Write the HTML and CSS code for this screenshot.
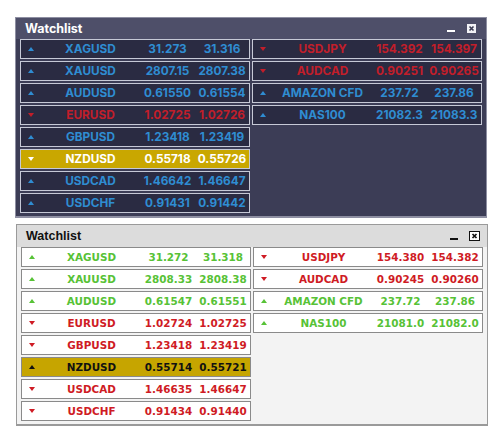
FILE: index.html
```html
<!DOCTYPE html>
<html>
<head>
<meta charset="utf-8">
<link rel="stylesheet" href="styles.css">
</head>
<body>
<div class="panel dark">
  <div class="title">
    <span class="name">Watchlist</span>
    <span class="min"></span>
    <span class="close"><svg width="9" height="9" viewBox="0 0 9 9"><rect x="0" y="0" width="9" height="9" fill="#f2f2f6"/><path d="M2.5 2.5 L6.5 6.5 M6.5 2.5 L2.5 6.5" stroke="#3a3b52" stroke-width="1.6"/></svg></span>
  </div>
  <div class="body">
    <div class="col">
      <div class="row up"><i class="arr"></i><span class="sym">XAGUSD</span><span class="bid">31.273</span><span class="ask">31.316</span></div>
      <div class="row up"><i class="arr"></i><span class="sym">XAUUSD</span><span class="bid">2807.15</span><span class="ask">2807.38</span></div>
      <div class="row up"><i class="arr"></i><span class="sym">AUDUSD</span><span class="bid">0.61550</span><span class="ask">0.61554</span></div>
      <div class="row down"><i class="arr"></i><span class="sym">EURUSD</span><span class="bid">1.02725</span><span class="ask">1.02726</span></div>
      <div class="row up"><i class="arr"></i><span class="sym">GBPUSD</span><span class="bid">1.23418</span><span class="ask">1.23419</span></div>
      <div class="row sel down"><i class="arr"></i><span class="sym">NZDUSD</span><span class="bid">0.55718</span><span class="ask">0.55726</span></div>
      <div class="row up"><i class="arr"></i><span class="sym">USDCAD</span><span class="bid">1.46642</span><span class="ask">1.46647</span></div>
      <div class="row up"><i class="arr"></i><span class="sym">USDCHF</span><span class="bid">0.91431</span><span class="ask">0.91442</span></div>
    </div>
    <div class="col">
      <div class="row down"><i class="arr"></i><span class="sym">USDJPY</span><span class="bid">154.392</span><span class="ask">154.397</span></div>
      <div class="row down"><i class="arr"></i><span class="sym">AUDCAD</span><span class="bid">0.90251</span><span class="ask">0.90265</span></div>
      <div class="row up"><i class="arr"></i><span class="sym">AMAZON CFD</span><span class="bid">237.72</span><span class="ask">237.86</span></div>
      <div class="row up"><i class="arr"></i><span class="sym">NAS100</span><span class="bid">21082.3</span><span class="ask">21083.3</span></div>
    </div>
  </div>
</div>

<div class="panel light">
  <div class="title">
    <span class="name">Watchlist</span>
    <span class="min"></span>
    <span class="close"><svg width="11" height="10" viewBox="0 0 11 10"><rect x="0.5" y="0.5" width="10" height="9" fill="#ffffff" stroke="#111" stroke-width="1"/><path d="M3.5 3 L7.5 7 M7.5 3 L3.5 7" stroke="#111" stroke-width="1.7"/></svg></span>
  </div>
  <div class="body">
    <div class="col">
      <div class="row up"><i class="arr"></i><span class="sym">XAGUSD</span><span class="bid">31.272</span><span class="ask">31.318</span></div>
      <div class="row up"><i class="arr"></i><span class="sym">XAUUSD</span><span class="bid">2808.33</span><span class="ask">2808.38</span></div>
      <div class="row up"><i class="arr"></i><span class="sym">AUDUSD</span><span class="bid">0.61547</span><span class="ask">0.61551</span></div>
      <div class="row down"><i class="arr"></i><span class="sym">EURUSD</span><span class="bid">1.02724</span><span class="ask">1.02725</span></div>
      <div class="row down"><i class="arr"></i><span class="sym">GBPUSD</span><span class="bid">1.23418</span><span class="ask">1.23419</span></div>
      <div class="row sel up"><i class="arr"></i><span class="sym">NZDUSD</span><span class="bid">0.55714</span><span class="ask">0.55721</span></div>
      <div class="row down"><i class="arr"></i><span class="sym">USDCAD</span><span class="bid">1.46635</span><span class="ask">1.46647</span></div>
      <div class="row down"><i class="arr"></i><span class="sym">USDCHF</span><span class="bid">0.91434</span><span class="ask">0.91440</span></div>
    </div>
    <div class="col">
      <div class="row down"><i class="arr"></i><span class="sym">USDJPY</span><span class="bid">154.380</span><span class="ask">154.382</span></div>
      <div class="row down"><i class="arr"></i><span class="sym">AUDCAD</span><span class="bid">0.90245</span><span class="ask">0.90260</span></div>
      <div class="row up"><i class="arr"></i><span class="sym">AMAZON CFD</span><span class="bid">237.72</span><span class="ask">237.86</span></div>
      <div class="row up"><i class="arr"></i><span class="sym">NAS100</span><span class="bid">21081.0</span><span class="ask">21082.0</span></div>
    </div>
  </div>
</div>
</body>
</html>
```

FILE: styles.css
```css
html, body {
  margin: 0;
  padding: 0;
  background: #ffffff;
}
body {
  padding: 17px 0 0 15px;
}
.panel {
  width: 472px;
  box-sizing: border-box;
  border: 1px solid;
}
.title {
  height: 21px;
  display: flex;
  align-items: center;
  padding: 0 10px 0 9px;
}
.name {
  flex: 1;
  font-weight: bold;
}
.min {
  width: 8px;
  height: 2px;
  margin-right: 12px;
  margin-top: 5px;
}
.close {
  display: flex;
}
.body {
  display: grid;
  grid-template-columns: 230px 230px;
  column-gap: 2px;
  align-items: start;
  padding: 0 4px 3px 4px;
}
.col {
  display: grid;
  grid-auto-rows: 20px;
  row-gap: 2px;
}
.row {
  display: grid;
  grid-template-columns: 20px 98px 58px 1fr;
  align-items: center;
  box-sizing: border-box;
  border: 1px solid;
  white-space: nowrap;
}
.row span {
  text-align: center;
}
.sym { padding-left: 1px; }
.bid { padding-right: 1px; }
.ask { padding-right: 2px; }
.arr {
  justify-self: center;
  width: 0;
  height: 0;
  border-left: 3.5px solid transparent;
  border-right: 3.5px solid transparent;
}
.row.up .arr { border-bottom: 4px solid currentColor; }
.row.down .arr { border-top: 4px solid currentColor; }

/* dark theme */
.dark {
  background: #3c3d56;
  border-color: #8e8fa2;
  border-bottom-width: 2px;
}
.dark .title {
  background: #4e4f69;
  color: #ffffff;
  font-family: Inter, "Noto Sans", sans-serif;
  font-size: 12.5px;
}
.dark .min { background: #ffffff; }
.dark .row {
  background: #2a2b42;
  border-color: #c6c9d6;
  font-family: Inter, "Noto Sans", sans-serif;
  font-size: 11.8px;
  font-weight: bold;
}
.dark .row.up { color: #2f8dd2; }
.dark .row.down { color: #c21e2a; }
.dark .row.sel {
  background: #c9a700;
  color: #ffffff;
}

/* light theme */
.light {
  margin-top: 6px;
  margin-left: 1px;
  background: #f3f3f3;
  border-color: #9a9a9a;
  border-bottom-width: 2px;
}
.light .title {
  background: #dcdcdc;
  color: #111111;
  font-family: "Liberation Sans", Arial, sans-serif;
  font-size: 12.5px;
  padding-right: 7px;
  height: 22px;
}
.light .min { background: #111111; margin-right: 11px; margin-top: 6px; }
.light .row {
  background: #ffffff;
  border-color: #8a8a8a;
  font-family: "DejaVu Sans", Verdana, sans-serif;
  font-size: 10.4px;
  font-weight: bold;
}
.light .row.up { color: #57c236; }
.light .row.down { color: #cf1b24; }
.light .row.sel {
  background: #c6a500;
  color: #111111;
}
```
